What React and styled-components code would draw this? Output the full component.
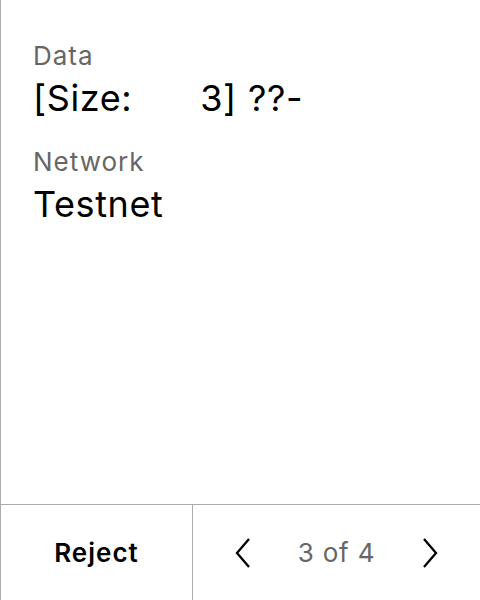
import React from "react";
import styled, { createGlobalStyle } from "styled-components";

const GlobalStyle = createGlobalStyle`
  body {
    margin: 0;
    font-family: Inter, "Liberation Sans", sans-serif;
    background: #ffffff;
  }
`;

const Screen = styled.div`
  width: 480px;
  height: 600px;
  box-sizing: border-box;
  border-left: 1px solid #ababab;
  display: flex;
  flex-direction: column;
`;

const Body = styled.div`
  flex: 1;
  padding: 40px 32px 0;
  display: flex;
  flex-direction: column;
  gap: 26px;
`;

const Field = styled.div`
  display: flex;
  flex-direction: column;
  gap: 4px;
`;

const Label = styled.div`
  font-size: 26px;
  line-height: 32px;
  letter-spacing: 1px;
  color: #666666;
`;

const Value = styled.div`
  font-size: 36px;
  line-height: 44px;
  letter-spacing: 0.6px;
  word-spacing: 0.6px;
  color: #000000;
  white-space: pre;
`;

const Footer = styled.div`
  height: 95px;
  border-top: 1px solid #ababab;
  display: flex;
`;

const RejectButton = styled.button`
  width: 192px;
  border: none;
  border-right: 1px solid #ababab;
  background: none;
  font-family: inherit;
  font-size: 26px;
  font-weight: 600;
  letter-spacing: 1px;
  color: #000000;
  padding: 0;
`;

const Pager = styled.div`
  flex: 1;
  display: flex;
  align-items: center;
  justify-content: space-between;
  padding: 0 26px;
`;

const ArrowButton = styled.button`
  width: 48px;
  height: 48px;
  border: none;
  background: none;
  padding: 0;
  display: flex;
  align-items: center;
  justify-content: center;
`;

const PageText = styled.span`
  font-size: 26px;
  letter-spacing: 0.8px;
  color: #666666;
`;

function Chevron({ dir }) {
  const d = dir === "left" ? "M14 1 L2 15 L14 29" : "M2 1 L14 15 L2 29";
  return (
    <svg width="16" height="30" viewBox="0 0 16 30">
      <path d={d} fill="none" stroke="#000" strokeWidth="2.3" />
    </svg>
  );
}

export default function App() {
  return (
    <>
      <GlobalStyle />
      <Screen>
        <Body>
          <Field>
            <Label>Data</Label>
            <Value>{"[Size:      3] ??-"}</Value>
          </Field>
          <Field>
            <Label>Network</Label>
            <Value>Testnet</Value>
          </Field>
        </Body>
        <Footer>
          <RejectButton>Reject</RejectButton>
          <Pager>
            <ArrowButton>
              <Chevron dir="left" />
            </ArrowButton>
            <PageText>3 of 4</PageText>
            <ArrowButton>
              <Chevron dir="right" />
            </ArrowButton>
          </Pager>
        </Footer>
      </Screen>
    </>
  );
}
